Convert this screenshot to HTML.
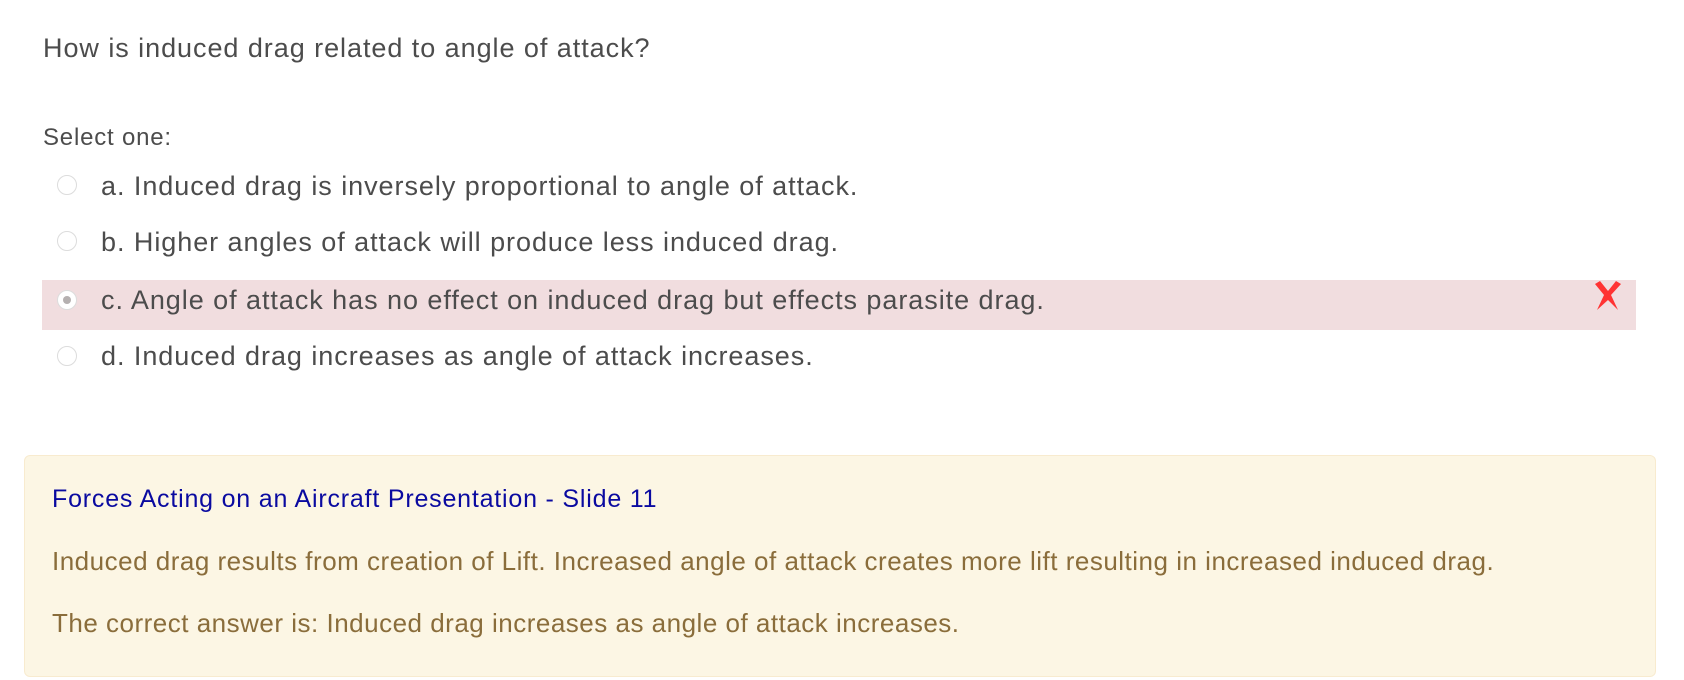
<!DOCTYPE html>
<html><head><meta charset="utf-8"><style>
html,body{margin:0;padding:0;background:#fff;width:1684px;height:680px;overflow:hidden}
body{font-family:"Liberation Sans",sans-serif;color:#4c4c4c;position:relative}
.t{position:absolute;white-space:nowrap;font-size:27px;line-height:30px;letter-spacing:0.95px}
.row{position:absolute;left:42px;width:1594px;height:50px}
.row.bad{background:#f1dddf}
.radio{position:absolute;left:57px;width:20px;height:20px;border:1px solid #dcdcdc;border-radius:50%;background:#fff;box-sizing:border-box}
.radio.on::after{content:"";position:absolute;left:5px;top:5px;width:8px;height:8px;border-radius:50%;background:#b5b0b0}
.fb{position:absolute;left:24px;top:455px;width:1632px;height:222px;box-sizing:border-box;background:#fcf6e4;border:1px solid #f8ebcf;border-radius:6px}
.f{font-size:26px;letter-spacing:0.5px;color:#8a6d3b}
</style></head><body>
<div class="t" style="left:43px;top:33px">How is induced drag related to angle of attack?</div>
<div class="t" style="left:43px;top:123px;font-size:24px;letter-spacing:0.8px">Select one:</div>

<div class="radio" style="top:175px"></div>
<div class="t" style="left:101px;top:171px">a. Induced drag is inversely proportional to angle of attack.</div>

<div class="radio" style="top:231px"></div>
<div class="t" style="left:101px;top:227px">b. Higher angles of attack will produce less induced drag.</div>

<div class="row bad" style="top:280px"></div>
<div class="radio on" style="top:290px"></div>
<div class="t" style="left:101px;top:285px">c. Angle of attack has no effect on induced drag but effects parasite drag.</div>
<svg style="position:absolute;left:1594px;top:280px" width="28" height="31" viewBox="0 0 28 31"><path d="M1 4 L6 1 L14 11 L22 1 L27 4 L17 15 L24 30 L14 20 L3 30 L10 15 Z" fill="#f33"/></svg>

<div class="radio" style="top:346px"></div>
<div class="t" style="left:101px;top:341px">d. Induced drag increases as angle of attack increases.</div>

<div class="fb"></div>
<div class="t" style="left:52px;top:484px;color:#0a0aa0;font-size:25px;letter-spacing:0.8px">Forces Acting on an Aircraft Presentation - Slide 11</div>
<div class="t f" style="left:52px;top:546px">Induced drag results from creation of Lift. Increased angle of attack creates more lift resulting in increased induced drag.</div>
<div class="t f" style="left:52px;top:608px">The correct answer is: Induced drag increases as angle of attack increases.</div>
</body></html>
